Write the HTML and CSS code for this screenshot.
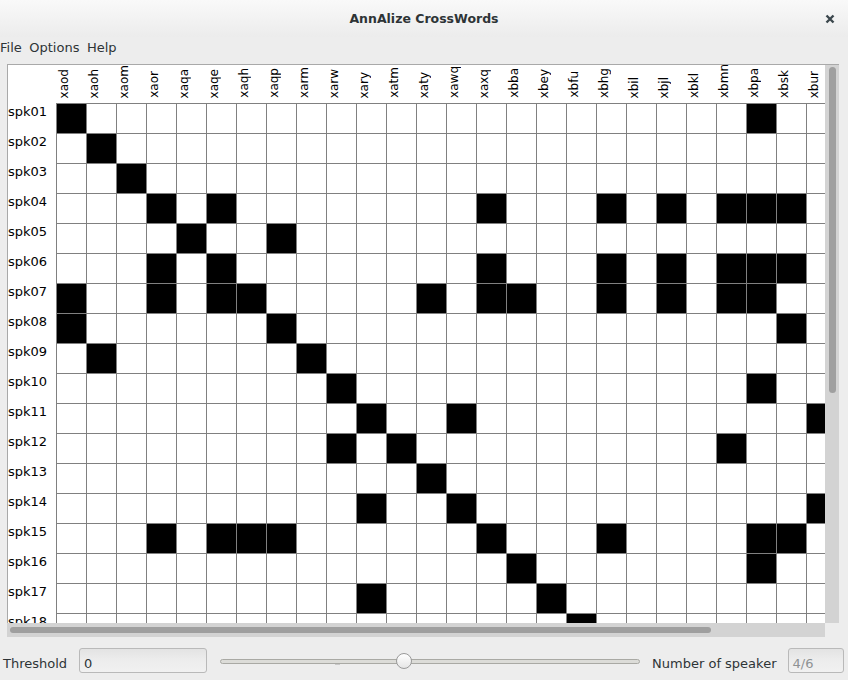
FILE: index.html
```
<!DOCTYPE html>
<html>
<head>
<meta charset="utf-8">
<title>AnnAlize CrossWords</title>
<link rel="stylesheet" href="styles.css">
</head>
<body>
<div class="titlebar">
  <div class="tb-side"></div>
  <div class="title">AnnAlize CrossWords</div>
  <div class="tb-side tb-end">
    <svg class="close" width="10" height="10" viewBox="0 0 10 10"><path d="M1.5 1.5 L8.5 8.5 M8.5 1.5 L1.5 8.5" stroke="#3b474d" stroke-width="2.4" stroke-linecap="butt"/></svg>
  </div>
</div>
<div class="menubar"><span>File</span><span>Options</span><span>Help</span></div>
<div class="scrollwin">
  <div class="viewport">
    <div class="matrix">
      <div class="head">
        <div class="hc"><span class="vt">xaod</span></div><div class="hc"><span class="vt">xaoh</span></div><div class="hc"><span class="vt">xaom</span></div><div class="hc"><span class="vt">xaor</span></div><div class="hc"><span class="vt">xaqa</span></div>
        <div class="hc"><span class="vt">xaqe</span></div><div class="hc"><span class="vt">xaqh</span></div><div class="hc"><span class="vt">xaqp</span></div><div class="hc"><span class="vt">xarm</span></div><div class="hc"><span class="vt">xarw</span></div>
        <div class="hc"><span class="vt">xary</span></div><div class="hc"><span class="vt">xatm</span></div><div class="hc"><span class="vt">xaty</span></div><div class="hc"><span class="vt">xawq</span></div><div class="hc"><span class="vt">xaxq</span></div>
        <div class="hc"><span class="vt">xbba</span></div><div class="hc"><span class="vt">xbey</span></div><div class="hc"><span class="vt">xbfu</span></div><div class="hc"><span class="vt">xbhg</span></div><div class="hc"><span class="vt">xbil</span></div>
        <div class="hc"><span class="vt">xbjl</span></div><div class="hc"><span class="vt">xbkl</span></div><div class="hc"><span class="vt">xbmn</span></div><div class="hc"><span class="vt">xbpa</span></div><div class="hc"><span class="vt">xbsk</span></div>
        <div class="hc"><span class="vt">xbur</span></div>
      </div>
      <div class="row"><div class="lbl">spk01</div><i class="on"></i><i></i><i></i><i></i><i></i> <i></i><i></i><i></i><i></i><i></i> <i></i><i></i><i></i><i></i><i></i> <i></i><i></i><i></i><i></i><i></i> <i></i><i></i><i></i><i class="on"></i><i></i> <i></i></div>
      <div class="row"><div class="lbl">spk02</div><i></i><i class="on"></i><i></i><i></i><i></i> <i></i><i></i><i></i><i></i><i></i> <i></i><i></i><i></i><i></i><i></i> <i></i><i></i><i></i><i></i><i></i> <i></i><i></i><i></i><i></i><i></i> <i></i></div>
      <div class="row"><div class="lbl">spk03</div><i></i><i></i><i class="on"></i><i></i><i></i> <i></i><i></i><i></i><i></i><i></i> <i></i><i></i><i></i><i></i><i></i> <i></i><i></i><i></i><i></i><i></i> <i></i><i></i><i></i><i></i><i></i> <i></i></div>
      <div class="row"><div class="lbl">spk04</div><i></i><i></i><i></i><i class="on"></i><i></i> <i class="on"></i><i></i><i></i><i></i><i></i> <i></i><i></i><i></i><i></i><i class="on"></i> <i></i><i></i><i></i><i class="on"></i><i></i> <i class="on"></i><i></i><i class="on"></i><i class="on"></i><i class="on"></i> <i></i></div>
      <div class="row"><div class="lbl">spk05</div><i></i><i></i><i></i><i></i><i class="on"></i> <i></i><i></i><i class="on"></i><i></i><i></i> <i></i><i></i><i></i><i></i><i></i> <i></i><i></i><i></i><i></i><i></i> <i></i><i></i><i></i><i></i><i></i> <i></i></div>
      <div class="row"><div class="lbl">spk06</div><i></i><i></i><i></i><i class="on"></i><i></i> <i class="on"></i><i></i><i></i><i></i><i></i> <i></i><i></i><i></i><i></i><i class="on"></i> <i></i><i></i><i></i><i class="on"></i><i></i> <i class="on"></i><i></i><i class="on"></i><i class="on"></i><i class="on"></i> <i></i></div>
      <div class="row"><div class="lbl">spk07</div><i class="on"></i><i></i><i></i><i class="on"></i><i></i> <i class="on"></i><i class="on"></i><i></i><i></i><i></i> <i></i><i></i><i class="on"></i><i></i><i class="on"></i> <i class="on"></i><i></i><i></i><i class="on"></i><i></i> <i class="on"></i><i></i><i class="on"></i><i class="on"></i><i></i> <i></i></div>
      <div class="row"><div class="lbl">spk08</div><i class="on"></i><i></i><i></i><i></i><i></i> <i></i><i></i><i class="on"></i><i></i><i></i> <i></i><i></i><i></i><i></i><i></i> <i></i><i></i><i></i><i></i><i></i> <i></i><i></i><i></i><i></i><i class="on"></i> <i></i></div>
      <div class="row"><div class="lbl">spk09</div><i></i><i class="on"></i><i></i><i></i><i></i> <i></i><i></i><i></i><i class="on"></i><i></i> <i></i><i></i><i></i><i></i><i></i> <i></i><i></i><i></i><i></i><i></i> <i></i><i></i><i></i><i></i><i></i> <i></i></div>
      <div class="row"><div class="lbl">spk10</div><i></i><i></i><i></i><i></i><i></i> <i></i><i></i><i></i><i></i><i class="on"></i> <i></i><i></i><i></i><i></i><i></i> <i></i><i></i><i></i><i></i><i></i> <i></i><i></i><i></i><i class="on"></i><i></i> <i></i></div>
      <div class="row"><div class="lbl">spk11</div><i></i><i></i><i></i><i></i><i></i> <i></i><i></i><i></i><i></i><i></i> <i class="on"></i><i></i><i></i><i class="on"></i><i></i> <i></i><i></i><i></i><i></i><i></i> <i></i><i></i><i></i><i></i><i></i> <i class="on"></i></div>
      <div class="row"><div class="lbl">spk12</div><i></i><i></i><i></i><i></i><i></i> <i></i><i></i><i></i><i></i><i class="on"></i> <i></i><i class="on"></i><i></i><i></i><i></i> <i></i><i></i><i></i><i></i><i></i> <i></i><i></i><i class="on"></i><i></i><i></i> <i></i></div>
      <div class="row"><div class="lbl">spk13</div><i></i><i></i><i></i><i></i><i></i> <i></i><i></i><i></i><i></i><i></i> <i></i><i></i><i class="on"></i><i></i><i></i> <i></i><i></i><i></i><i></i><i></i> <i></i><i></i><i></i><i></i><i></i> <i></i></div>
      <div class="row"><div class="lbl">spk14</div><i></i><i></i><i></i><i></i><i></i> <i></i><i></i><i></i><i></i><i></i> <i class="on"></i><i></i><i></i><i class="on"></i><i></i> <i></i><i></i><i></i><i></i><i></i> <i></i><i></i><i></i><i></i><i></i> <i class="on"></i></div>
      <div class="row"><div class="lbl">spk15</div><i></i><i></i><i></i><i class="on"></i><i></i> <i class="on"></i><i class="on"></i><i class="on"></i><i></i><i></i> <i></i><i></i><i></i><i></i><i class="on"></i> <i></i><i></i><i></i><i class="on"></i><i></i> <i></i><i></i><i></i><i class="on"></i><i class="on"></i> <i></i></div>
      <div class="row"><div class="lbl">spk16</div><i></i><i></i><i></i><i></i><i></i> <i></i><i></i><i></i><i></i><i></i> <i></i><i></i><i></i><i></i><i></i> <i class="on"></i><i></i><i></i><i></i><i></i> <i></i><i></i><i></i><i class="on"></i><i></i> <i></i></div>
      <div class="row"><div class="lbl">spk17</div><i></i><i></i><i></i><i></i><i></i> <i></i><i></i><i></i><i></i><i></i> <i class="on"></i><i></i><i></i><i></i><i></i> <i></i><i class="on"></i><i></i><i></i><i></i> <i></i><i></i><i></i><i></i><i></i> <i></i></div>
      <div class="row"><div class="lbl">spk18</div><i></i><i></i><i></i><i></i><i></i> <i></i><i></i><i></i><i></i><i></i> <i></i><i></i><i></i><i></i><i></i> <i></i><i></i><i class="on"></i><i></i><i></i> <i></i><i></i><i></i><i></i><i></i> <i></i></div>
    </div>
  </div>
  <div class="vscroll"><div class="vthumb"></div></div>
  <div class="hscroll"><div class="hthumb"></div></div>
  <div class="corner"></div>
</div>
<div class="bottombar">
  <span class="label lab-threshold">Threshold</span>
  <div class="entry entry-threshold">0</div>
  <div class="slider">
    <div class="trough"></div>
    <div class="tick"></div>
    <div class="knob"></div>
  </div>
  <span class="label lab-speaker">Number of speaker</span>
  <div class="entry entry-speaker">4/6</div>
</div>
</body>
</html>
```
FILE: styles.css
```
* { box-sizing: border-box; }
html, body { margin: 0; padding: 0; }
body {
  width: 848px;
  height: 680px;
  overflow: hidden;
  background: #ededed;
  font-family: "DejaVu Sans", sans-serif;
  font-size: 13px;
  color: #2e3436;
}

.titlebar {
  height: 37px;
  display: grid;
  grid-template-columns: 1fr auto 1fr;
  align-items: center;
  background: linear-gradient(#f9f9f9, #ececec);
}
.title {
  font-weight: bold;
  font-size: 12.5px;
  color: #2e3436;
}
.tb-end {
  display: flex;
  justify-content: flex-end;
  padding-right: 13px;
}
.close { display: block; }

.menubar {
  height: 21px;
  display: flex;
  align-items: center;
  gap: 7.5px;
  line-height: 15px;
  color: #2e3436;
}

.scrollwin {
  margin: 6px 0 0 7px;
  width: 832px;
  display: grid;
  grid-template-columns: 818px 14px;
  grid-template-rows: 559px 14px;
}
.viewport {
  border-top: 1px solid #a9a9a9;
  border-left: 1px solid #a9a9a9;
  background: #fff;
  overflow: hidden;
}
.vscroll {
  background: #d3d3d3;
  border-top: 1px solid #a9a9a9;
  padding: 2px 0 0 4px;
}
.vthumb {
  width: 7px;
  height: 326px;
  border-radius: 4px;
  background: #9f9f9f;
}
.hscroll {
  background: #d3d3d3;
  padding: 4px 0 0 3px;
}
.hthumb {
  width: 701px;
  height: 6px;
  border-radius: 3px;
  background: #9f9f9f;
}
.corner { background: #ededed; }

.matrix { width: max-content; color: #000; }
.head {
  display: flex;
  height: 38px;
  padding-left: 48px;
}
.hc {
  flex: none;
  width: 30px;
  display: flex;
  align-items: flex-end;
  padding: 0 0 5px 1px;
}
.vt {
  writing-mode: vertical-rl;
  transform: rotate(180deg);
  font-size: 12px;
  line-height: 14px;
}
.row {
  display: flex;
  height: 30px;
}
.lbl {
  flex: none;
  width: 48px;
  padding-top: 1px;
  font-size: 13px;
  line-height: 15px;
}
.row i {
  flex: none;
  width: 30px;
  height: 30px;
  border-left: 1px solid #808080;
  border-top: 1px solid #808080;
}
.row i.on { background: #000; }

.bottombar {
  margin-top: 11px;
  height: 25px;
  display: flex;
  align-items: flex-start;
}
.label {
  line-height: 15px;
  margin-top: 8px;
  color: #2e3436;
}
.lab-threshold { margin-left: 3px; }
.entry {
  height: 25px;
  border: 1px solid #b9b9b9;
  border-radius: 3px;
  background: linear-gradient(#e3e3e3, #ececec 45%, #f1f1f1);
  padding: 7px 0 0 4px;
  line-height: 15px;
}
.entry-threshold { width: 128px; margin-left: 12px; color: #2e3436; }
.entry-speaker { width: 56px; margin-left: 11px; color: #8e9293; }
.lab-speaker { margin-left: 12px; }

.slider {
  position: relative;
  width: 420px;
  height: 25px;
  margin-left: 13px;
}
.trough {
  margin-top: 11px;
  height: 5px;
  border: 1px solid #a9a9a4;
  border-radius: 3px;
  background: #dcdcd8;
}
.tick {
  position: absolute;
  left: 115px;
  top: 16px;
  width: 5px;
  height: 1px;
  background: #c9c9c9;
}
.knob {
  position: absolute;
  left: 176px;
  top: 5px;
  width: 16px;
  height: 16px;
  border-radius: 50%;
  border: 1px solid #9a9a9a;
  background: linear-gradient(#ffffff, #e6e6e6);
}
```
